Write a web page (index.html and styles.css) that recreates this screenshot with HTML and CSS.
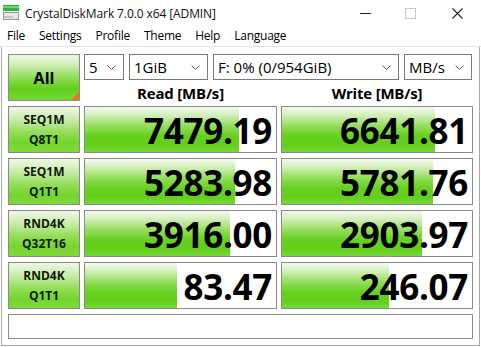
FILE: index.html
```html
<!DOCTYPE html>
<html lang="en">
<head>
<meta charset="UTF-8">
<title>CrystalDiskMark 7.0.0 x64 [ADMIN]</title>
<link rel="stylesheet" href="styles.css">
</head>
<body>

<div class="win">
	<div class="titlebar">
		<svg class="appicon" width="16" height="16" viewBox="0 0 16 16">
			<rect x="0" y="0" width="16" height="6" fill="#34b04a"/>
			<rect x="0" y="1" width="16" height="2" fill="#6fd36f"/>
			<rect x="0" y="7" width="16" height="8" fill="#9a9a9a"/>
			<rect x="1" y="8" width="14" height="6" fill="#e6e6e6"/>
			<rect x="1" y="11" width="9" height="2" fill="#c4c4c4"/>
		</svg>
		<span class="title">CrystalDiskMark 7.0.0 x64 [ADMIN]</span>
		<div class="ctrls">
			<span class="min"></span>
			<span class="max"></span>
			<svg class="close" width="11" height="11" viewBox="0 0 11 11"><path d="M0.5 0.5L10.5 10.5M10.5 0.5L0.5 10.5" stroke="#222" stroke-width="1.1"/></svg>
		</div>
	</div>
	<ul class="menu">
		<li>File</li><li>Settings</li><li>Profile</li><li>Theme</li><li>Help</li><li>Language</li>
	</ul>
	<div class="main">
		<div class="grid">
			<div class="allbtn">All<span class="corner"></span></div>
			<div class="top">
				<div class="combos">
					<div class="combo c1"><span>5</span><svg width="9" height="5" viewBox="0 0 9 5"><path d="M0.5 0.5L4.5 4.5L8.5 0.5" fill="none" stroke="#555"/></svg></div>
					<div class="combo c2"><span>1GiB</span><svg width="9" height="5" viewBox="0 0 9 5"><path d="M0.5 0.5L4.5 4.5L8.5 0.5" fill="none" stroke="#555"/></svg></div>
					<div class="combo c3"><span>F: 0% (0/954GiB)</span><svg width="9" height="5" viewBox="0 0 9 5"><path d="M0.5 0.5L4.5 4.5L8.5 0.5" fill="none" stroke="#555"/></svg></div>
					<div class="combo c4"><span>MB/s</span><svg width="9" height="5" viewBox="0 0 9 5"><path d="M0.5 0.5L4.5 4.5L8.5 0.5" fill="none" stroke="#555"/></svg></div>
				</div>
				<div class="heads"><span>Read [MB/s]</span><span>Write [MB/s]</span></div>
			</div>

			<div class="lbl">SEQ1M<br>Q8T1</div>
			<div class="val"><div class="bar" style="width:154px"></div><span>7479.19</span></div>
			<div class="val"><div class="bar" style="width:153px"></div><span>6641.81</span></div>

			<div class="lbl">SEQ1M<br>Q1T1</div>
			<div class="val"><div class="bar" style="width:150px"></div><span>5283.98</span></div>
			<div class="val"><div class="bar" style="width:151px"></div><span>5781.76</span></div>

			<div class="lbl">RND4K<br>Q32T16</div>
			<div class="val"><div class="bar" style="width:145px"></div><span>3916.00</span></div>
			<div class="val"><div class="bar" style="width:140px"></div><span>2903.97</span></div>

			<div class="lbl">RND4K<br>Q1T1</div>
			<div class="val"><div class="bar" style="width:92px"></div><span>83.47</span></div>
			<div class="val"><div class="bar" style="width:107px"></div><span>246.07</span></div>

			<div class="comment"></div>
		</div>
	</div>
</div>

</body>
</html>
```

FILE: styles.css
```css
body{margin:0;background:#fff;font-family:"Open Sans","Noto Sans",sans-serif;color:#000;}
.win{width:481px;height:347px;overflow:hidden;background:#fff;}

.titlebar{height:26px;display:flex;align-items:center;padding-left:3px;}
.appicon{margin-right:6px;margin-top:-1px;}
.title{font-size:12px;color:#111;letter-spacing:-0.1px;}
.ctrls{margin-left:auto;display:flex;align-items:center;height:26px;}
.min{width:11px;height:1px;background:#222;margin-right:34px;}
.max{width:9px;height:9px;border:1px solid #c8c8c8;margin-right:36px;}
.close{margin-right:18px;}

.menu{margin:0;padding:0;list-style:none;display:flex;height:20px;line-height:19px;border-bottom:1px solid #e2e2e2;}
.menu li{font-size:12px;padding:0 7px;letter-spacing:-0.25px;}

.main{margin-left:1px;width:477px;height:291px;border:1px solid #a8a8a8;border-top:0;padding:7px 0 0 0;}
.grid{display:grid;grid-template-columns:72px 193px 192px;grid-template-rows:47px 47px 47px 47px 47px 25px;column-gap:4px;row-gap:5px;margin-left:6px;width:465px;}

.allbtn{position:relative;border:1px solid #8a8a8a;box-sizing:border-box;display:flex;align-items:center;justify-content:center;font-weight:bold;font-size:16px;padding-top:1px;
	background:linear-gradient(to bottom,#f0f8e8 0%,#c9ecab 25%,#8ddc55 50%,#64cf1c 75%,#74d834 100%);}
.corner{position:absolute;right:0;bottom:0;width:0;height:0;border-style:solid;border-width:0 0 8px 8px;border-color:transparent transparent #e87a1a transparent;}

.top{grid-column:2 / 4;display:flex;flex-direction:column;}
.combos{display:flex;gap:5px;height:26px;}
.combo{box-sizing:border-box;height:26px;border:1px solid #7a7a7a;display:flex;align-items:center;justify-content:space-between;padding:0 7px 0 4px;font-size:15px;line-height:24px;}
.combo svg{margin-top:1px;}
.c1{width:40px;}
.c2{width:79px;}
.c3{width:186px;}
.c4{width:68px;}
.heads{display:grid;grid-template-columns:193px 192px;column-gap:4px;flex:1;padding-top:4px;}
.heads span{text-align:center;font-weight:bold;font-size:15px;line-height:19px;letter-spacing:-0.2px;}

.lbl{box-sizing:border-box;border:1px solid #8a8a8a;text-align:center;font-weight:bold;font-size:12px;line-height:20px;padding-top:3px;color:#0e1a08;
	background:linear-gradient(to bottom,#eef7e6 0%,#c6eba5 30%,#94de5c 55%,#74d52c 80%,#80da3a 100%);}

.val{position:relative;box-sizing:border-box;border:1px solid #8a8a8a;background:#fff;}
.bar{position:absolute;left:0;top:0;bottom:0;
	background:linear-gradient(to bottom,#f3f9ee 0%,#d3efbb 18%,#98df62 40%,#66d01f 65%,#62cf1a 85%,#76d83a 100%);}
.val span{position:relative;display:block;text-align:right;padding-right:4px;font-weight:bold;font-size:35px;line-height:47px;letter-spacing:-0.3px;}

.comment{grid-column:1 / 4;border:1px solid #8a8a8a;box-sizing:border-box;background:#fff;}
```
